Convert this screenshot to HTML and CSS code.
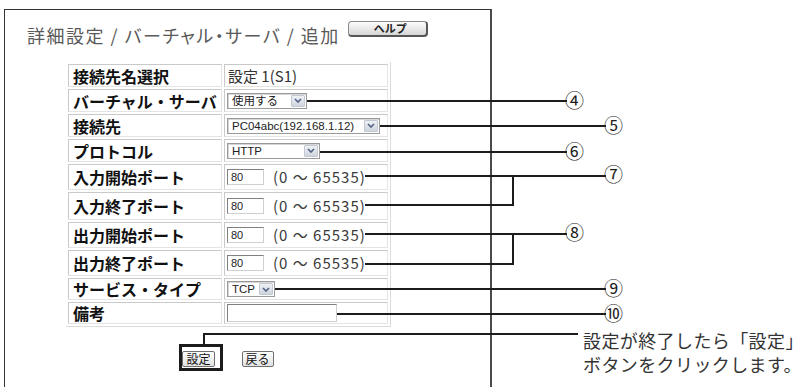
FILE: index.html
```html
<!DOCTYPE html>
<html lang="ja">
<head>
<meta charset="utf-8">
<title>バーチャル・サーバ 追加</title>
<link rel="stylesheet" href="styles.css">
</head>
<body>
<div class="page">
  <div class="frame">
    <div class="head">
      <h1 class="title">詳細設定 / バーチャル・サーバ / 追加</h1>
      <span class="help">ヘルプ</span>
    </div>
    <table class="form">
      <tr class="r1"><th>接続先名選択</th><td><span class="plain">設定 1(S1)</span></td></tr>
      <tr class="r2"><th>バーチャル・サーバ</th><td><span class="select w-use">使用する<i class="arr"><svg width="8" height="5" viewBox="0 0 8 5"><path d="M1 1l3 3 3-3"/></svg></i></span></td></tr>
      <tr class="r3"><th>接続先</th><td><span class="select w-host">PC04abc(192.168.1.12)<i class="arr"><svg width="8" height="5" viewBox="0 0 8 5"><path d="M1 1l3 3 3-3"/></svg></i></span></td></tr>
      <tr class="r4"><th>プロトコル</th><td><span class="select w-proto">HTTP<i class="arr"><svg width="8" height="5" viewBox="0 0 8 5"><path d="M1 1l3 3 3-3"/></svg></i></span></td></tr>
      <tr class="r5"><th>入力開始ポート</th><td><span class="port"><span class="inp w-port">80</span><span class="range">(0 ～ 65535)</span></span></td></tr>
      <tr class="r6"><th>入力終了ポート</th><td><span class="port"><span class="inp w-port">80</span><span class="range">(0 ～ 65535)</span></span></td></tr>
      <tr class="r7"><th>出力開始ポート</th><td><span class="port"><span class="inp w-port">80</span><span class="range">(0 ～ 65535)</span></span></td></tr>
      <tr class="r8"><th>出力終了ポート</th><td><span class="port"><span class="inp w-port">80</span><span class="range">(0 ～ 65535)</span></span></td></tr>
      <tr class="r9"><th>サービス・タイプ</th><td><span class="select w-tcp">TCP<i class="arr"><svg width="8" height="5" viewBox="0 0 8 5"><path d="M1 1l3 3 3-3"/></svg></i></span></td></tr>
      <tr class="r10"><th>備考</th><td><span class="inp w-note"></span></td></tr>
    </table>
    <div class="actions">
      <span class="btn">設定</span>
      <span class="btn">戻る</span>
    </div>
  </div>

  <svg class="callouts" width="805" height="387" viewBox="0 0 805 387">
    <g class="lines">
      <path d="M307 101H567"/>
      <path d="M380 126H606"/>
      <path d="M320 152H567"/>
      <path d="M365 176H606M513 175V206M365 205H514"/>
      <path d="M365 234H567M513 233V265M365 264H514"/>
      <path d="M275 289H606"/>
      <path d="M337 314H606"/>
      <path d="M204 334H578M204 333V345"/>
      <rect x="180.5" y="345.5" width="41" height="24" class="ring"/>
    </g>
    <g class="nums">
      <text x="565" y="99.5">④</text>
      <text x="604" y="124.5">⑤</text>
      <text x="565" y="150.5">⑥</text>
      <text x="604" y="173.5">⑦</text>
      <text x="565" y="231">⑧</text>
      <text x="604" y="287.5">⑨</text>
      <text x="604" y="312.5">⑩</text>
    </g>
    <g class="note">
      <text x="583" y="340">設定が終了したら「設定」</text>
      <text x="583" y="364">ボタンをクリックします。</text>
    </g>
  </svg>
</div>
</body>
</html>
```

FILE: styles.css
```css
* { box-sizing: border-box; }

html, body {
  margin: 0;
  padding: 0;
  background: #fff;
}

body {
  width: 805px;
  height: 387px;
  overflow: hidden;
  font-family: "Noto Sans CJK JP", "Noto Sans", sans-serif;
  color: #222;
}

.page {
  position: relative;
  width: 805px;
  height: 387px;
  padding: 9px 0 0 4px;
}

.frame {
  width: 488px;
  height: 378px;
  border: 1px solid #333;
  border-right: 2px solid #4a4a4a;
  border-bottom: none;
}

.head {
  display: flex;
  align-items: flex-start;
  gap: 8px;
  height: 27px;
  padding: 11px 0 0 22px;
}

.title {
  margin: 5px 0 0;
  font-size: 18px;
  line-height: 18px;
  font-weight: 400;
  color: #5a5a5a;
  letter-spacing: 1.5px;
  font-feature-settings: "palt";
  white-space: nowrap;
}

.help {
  display: flex;
  align-items: center;
  justify-content: center;
  width: 80px;
  height: 16px;
  border: 1px solid #8a8a8a;
  border-right: 2px solid #555;
  border-bottom: 2px solid #555;
  border-radius: 4px;
  background: linear-gradient(#fdfdfd, #d6d6d6);
  font-size: 11px;
  font-weight: 700;
  line-height: 1;
  color: #222;
  padding-left: 6px;
}

.form {
  margin: 25px 0 0 61px;
  border-collapse: separate;
  border-spacing: 2px;
  border-right: 1px solid #dcdcdc;
  border-bottom: 1px solid #dcdcdc;
}

.form th,
.form td {
  border: 1px solid;
  border-color: #c9c9c9 #e4e4e4 #e4e4e4 #c9c9c9;
  padding: 0;
  vertical-align: middle;
}

.form th {
  width: 154px;
  padding-left: 4px;
  text-align: left;
  font-size: 16px;
  font-weight: 700;
  line-height: 18px;
  color: #111;
  white-space: nowrap;
}

.form td {
  width: 164px;
  padding-left: 2px;
  line-height: 16px;
}

.r1 th, .r1 td { height: 23px; }
.r2 th, .r2 td { height: 23px; }
.r3 th, .r3 td { height: 23px; }
.r4 th, .r4 td { height: 23px; }
.r5 th, .r5 td { height: 26px; }
.r6 th, .r6 td { height: 28px; }
.r7 th, .r7 td { height: 26px; }
.r8 th, .r8 td { height: 26px; }
.r9 th, .r9 td { height: 22px; }
.r10 th, .r10 td { height: 22px; }

.plain {
  display: block;
  padding-left: 1px;
  font-size: 15px;
  color: #333;
}

.select {
  display: flex;
  align-items: center;
  justify-content: space-between;
  height: 16px;
  padding: 0 1px 0 4px;
  border: 1px solid #9a9a9a;
  box-shadow: inset 1px 1px 0 #d6d6d6;
  background: #fff;
  font-family: "Liberation Sans", "Noto Sans CJK JP", sans-serif;
  font-size: 11.5px;
  color: #222;
  white-space: nowrap;
}

.select .arr {
  display: flex;
  align-items: center;
  justify-content: center;
  width: 14px;
  height: 12px;
  border: 1px solid #c3c9d3;
  border-radius: 1px;
  background: linear-gradient(#eef0f4, #cfd5de);
}

.select .arr path {
  fill: none;
  stroke: #4f6184;
  stroke-width: 1.6;
}

.w-use { width: 80px; }
.w-host { width: 153px; }
.w-proto { width: 93px; }
.w-tcp { width: 48px; }

.port {
  display: flex;
  align-items: center;
  gap: 9px;
}

.inp {
  display: block;
  height: 16px;
  padding-left: 3px;
  border: 1px solid;
  border-color: #808080 #cfcfcf #cfcfcf #808080;
  background: #fff;
  font-family: "Liberation Sans", sans-serif;
  font-size: 11px;
  line-height: 14px;
  color: #222;
}

.w-port { width: 37px; }
.w-note { width: 110px; height: 18px; }

.range {
  font-size: 15px;
  line-height: 16px;
  color: #3a3a3a;
  letter-spacing: 1px;
  white-space: nowrap;
}

.actions {
  display: flex;
  justify-content: center;
  gap: 27px;
  width: 324px;
  margin: 24px 0 0 61px;
}

.btn {
  display: flex;
  align-items: center;
  justify-content: center;
  height: 16px;
  padding: 0 3px;
  border: 1px solid #707070;
  border-radius: 2px;
  background: linear-gradient(#ffffff, #e2e2e2);
  font-size: 12px;
  line-height: 1;
  color: #111;
}

.callouts {
  position: absolute;
  top: 0;
  left: 0;
  pointer-events: none;
}

.lines path {
  fill: none;
  stroke: #1c1c1c;
  stroke-width: 2;
}

.lines .ring {
  fill: none;
  stroke: #1c1c1c;
  stroke-width: 3;
}

.nums text {
  font-family: "Noto Sans CJK JP", sans-serif;
  font-size: 19px;
  font-weight: 400;
  fill: #1c1c1c;
  dominant-baseline: central;
}

.note text {
  font-family: "Noto Sans CJK JP", sans-serif;
  font-size: 18px;
  letter-spacing: 0.4px;
  fill: #333;
  dominant-baseline: central;
}
```
